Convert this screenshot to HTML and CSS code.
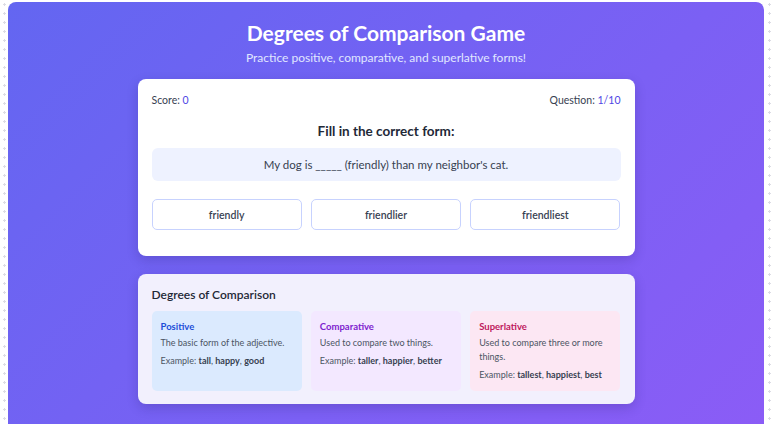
FILE: index.html
```html
<!DOCTYPE html>
<html lang="en">
<head>
  <meta charset="UTF-8" />
  <meta name="viewport" content="width=device-width, initial-scale=1.0" />
  <title>Degrees of Comparison Game</title>
  <link rel="stylesheet" href="styles.css">
</head>
<body>
  <div class="app">
    <h1>Degrees of Comparison Game</h1>
    <p class="subtitle">Practice positive, comparative, and superlative forms!</p>

    <div class="card game">
      <div class="stats">
        <span>Score: <b id="score">0</b></span>
        <span>Question: <b id="qnum">1/10</b></span>
      </div>
      <h2 class="prompt">Fill in the correct form:</h2>
      <div class="sentence">My dog is _____ (friendly) than my neighbor's cat.</div>
      <div class="options">
        <button class="option">friendly</button>
        <button class="option">friendlier</button>
        <button class="option">friendliest</button>
      </div>
    </div>

    <div class="card info">
      <h3>Degrees of Comparison</h3>
      <div class="degrees">
        <div class="degree positive">
          <h4>Positive</h4>
          <p>The basic form of the adjective.</p>
          <p>Example: <b>tall</b>, <b>happy</b>, <b>good</b></p>
        </div>
        <div class="degree comparative">
          <h4>Comparative</h4>
          <p>Used to compare two things.</p>
          <p>Example: <b>taller</b>, <b>happier</b>, <b>better</b></p>
        </div>
        <div class="degree superlative">
          <h4>Superlative</h4>
          <p>Used to compare three or more things.</p>
          <p>Example: <b>tallest</b>, <b>happiest</b>, <b>best</b></p>
        </div>
      </div>
    </div>
  </div>
</body>
</html>
```

FILE: styles.css
```css
html { overflow: hidden; }
body {
  font-family: Lato, "Open Sans", sans-serif;
  margin: 2px 13px 0 8px;
  background-color: #fff;
  background-image: radial-gradient(circle, #dcdce4 1px, transparent 1.3px);
  background-size: 9px 9px;
  color: #1f2937;
}
.app {
  background: linear-gradient(135deg, #6366f1, #8b5cf6);
  border-radius: 8px;
  padding: 18px 0 20px;
  min-height: 430px;
  box-sizing: border-box;
}
h1 {
  margin: 0;
  text-align: center;
  color: #fff;
  font-size: 21px;
  line-height: 26px;
  font-weight: 700;
}
.subtitle {
  margin: 4px 0 0;
  text-align: center;
  color: #e0e7ff;
  font-size: 12px;
  line-height: 16px;
}
.card {
  width: 497px;
  box-sizing: border-box;
  margin: 13px auto 0;
  border-radius: 8px;
  background: #fff;
  box-shadow: 0 4px 12px rgba(30, 20, 90, 0.2);
  padding: 14px 14px 26px;
}
.stats {
  display: flex;
  justify-content: space-between;
  font-size: 10.5px;
  line-height: 14px;
  color: #374151;
}
.stats b { font-weight: 400; color: #4f46e5; }
.prompt {
  margin: 15px 0 0;
  text-align: center;
  font-size: 13.5px;
  line-height: 18px;
  font-weight: 700;
}
.sentence {
  margin-top: 8px;
  background: #eef2ff;
  border-radius: 6px;
  height: 33px;
  display: flex;
  align-items: center;
  justify-content: center;
  font-size: 11.5px;
  color: #374151;
}
.options {
  display: grid;
  grid-template-columns: repeat(3, 1fr);
  gap: 9px;
  margin-top: 18px;
}
.option {
  height: 31px;
  background: #fff;
  border: 1px solid #c7d2fe;
  border-radius: 5px;
  font-family: inherit;
  font-size: 10.5px;
  font-weight: 600;
  color: #374151;
}
.card.info {
  margin-top: 18px;
  background: #f2f0fd;
  padding: 13px 14px 13px;
}
.info h3 {
  margin: 0;
  font-size: 12px;
  line-height: 16px;
  font-weight: 600;
  color: #1f2937;
}
.degrees {
  display: grid;
  grid-template-columns: repeat(3, 1fr);
  gap: 9px;
  margin-top: 8px;
}
.degree {
  border-radius: 5px;
  padding: 9px 9px 9px;
  min-height: 79px;
  box-sizing: border-box;
}
.degree h4 {
  margin: 0 0 3px;
  font-size: 9.5px;
  line-height: 13px;
  font-weight: 700;
}
.degree p {
  margin: 0 0 4px;
  font-size: 9px;
  line-height: 14px;
  color: #4b5563;
}
.degree p:last-child { margin-bottom: 0; }
.degree b { color: #374151; }
.positive { background: #dbeafe; }
.positive h4 { color: #1d4ed8; }
.comparative { background: #f3e8ff; }
.comparative h4 { color: #7e22ce; }
.superlative { background: #fce7f3; }
.superlative h4 { color: #be185d; }
```
